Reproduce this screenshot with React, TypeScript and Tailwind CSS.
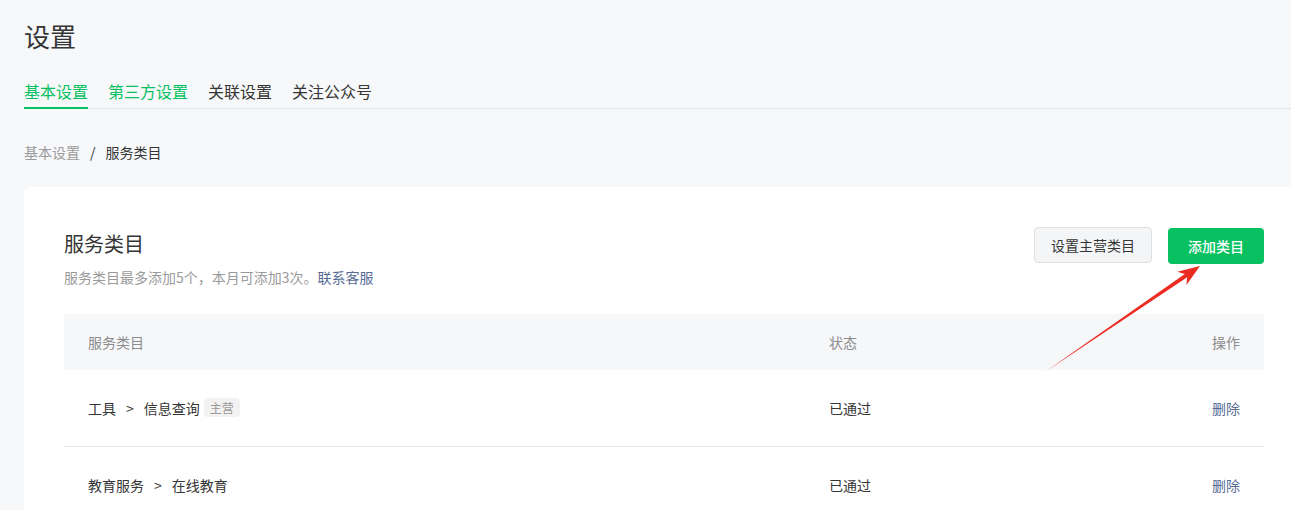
import React from "react";

const rows = [
  { path: ["工具", "信息查询"], main: true, status: "已通过" },
  { path: ["教育服务", "在线教育"], main: false, status: "已通过" },
];

function Arrow() {
  // red annotation arrow pointing at the add button
  return (
    <svg
      className="absolute left-[1040px] top-[260px] pointer-events-none"
      width="170"
      height="120"
      viewBox="0 0 170 120"
    >
      <polygon
        points="5,112 147.2,17.2 146.4,25 160,6 137.3,11.8 144.8,14"
        fill="#ec2b22"
      />
    </svg>
  );
}

export default function App() {
  const tabs = ["基本设置", "第三方设置", "关联设置", "关注公众号"];

  return (
    <div
      className="relative h-[510px] w-full overflow-hidden bg-[#f7f8fa] text-[#353535]"
      style={{ fontFamily: '"Noto Sans CJK SC", "Noto Sans", sans-serif' }}
    >
      <div className="pl-6 pt-[20px]">
        <h1 className="text-[26px] leading-8 font-normal">设置</h1>

        <div className="mt-[27px] flex gap-5 border-b border-[#e4e4e4]">
          {tabs.map((t, i) => (
            <div
              key={t}
              className={
                "-mb-px pb-[4px] text-base leading-6 border-b-2 " +
                (i === 0
                  ? "border-[#07c160] text-[#07c160]"
                  : i === 1
                  ? "border-transparent text-[#07c160]"
                  : "border-transparent text-[#353535]")
              }
            >
              {t}
            </div>
          ))}
        </div>

        <div className="mt-[33px] flex items-center text-sm leading-5">
          <span className="text-[#9a9a9a]">基本设置</span>
          <span className="mx-[10px] text-[#353535]">/</span>
          <span className="text-[#353535]">服务类目</span>
        </div>
      </div>

      <div className="ml-6 mt-[25px] w-[1280px] rounded-md bg-white px-10 pt-10 pb-10">
        <div className="flex items-start justify-between">
          <div>
            <h2 className="mt-[3px] text-xl leading-7 font-normal">服务类目</h2>
            <p className="mt-[9px] text-sm leading-5 text-[#9a9a9a]">
              服务类目最多添加5个，本月可添加3次。
              <a className="text-[#576b95]">联系客服</a>
            </p>
          </div>
          <div className="flex gap-4">
            <button className="h-9 rounded border border-[#e0e0e0] bg-[#f4f5f7] px-4 text-sm text-[#353535]">
              设置主营类目
            </button>
            <button className="mt-px h-9 rounded bg-[#07c160] px-5 text-sm font-medium text-white">
              添加类目
            </button>
          </div>
        </div>

        <div className="mt-[27px] text-sm">
          <div className="flex h-14 items-center bg-[#f6f7f9] px-6 text-[#8c8c8c]">
            <div className="flex-1">服务类目</div>
            <div className="w-[300px]">状态</div>
            <div className="w-[111px] text-right">操作</div>
          </div>
          {rows.map((r) => (
            <div
              key={r.path.join()}
              className="flex h-[77px] items-center border-b border-[#e7e7e7] px-6 pb-px"
            >
              <div className="flex flex-1 items-center">
                <span>{r.path[0]}</span>
                <span className="mx-[10px]">&gt;</span>
                <span>{r.path[1]}</span>
                {r.main && (
                  <span className="ml-1 rounded-sm bg-[#f2f2f2] px-1.5 text-xs leading-[19px] text-[#9a9a9a]">
                    主营
                  </span>
                )}
              </div>
              <div className="w-[300px]">{r.status}</div>
              <div className="w-[111px] text-right text-[#576b95]">删除</div>
            </div>
          ))}
        </div>
      </div>

      <Arrow />
    </div>
  );
}
